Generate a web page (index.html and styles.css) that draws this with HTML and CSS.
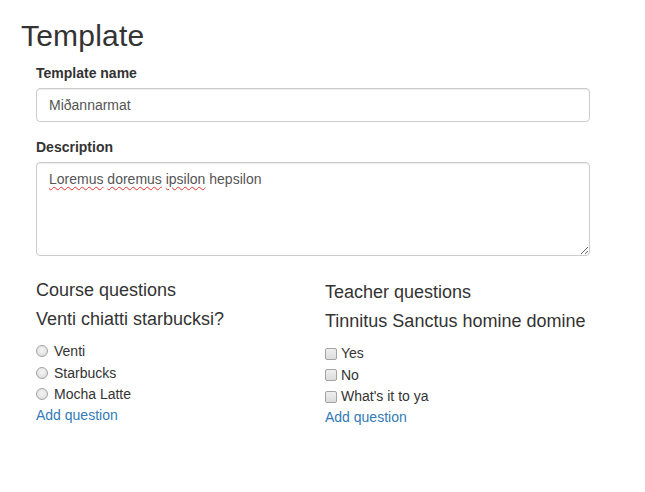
FILE: index.html
```html
<!DOCTYPE html>
<html lang="en">
<head>
<meta charset="utf-8">
<title>Template</title>
<link rel="stylesheet" href="styles.css">
</head>
<body>
<div class="page">
  <h1 class="title">Template</h1>
  <form class="form">
    <div class="form-group">
      <label class="field-label" for="tname">Template name</label>
      <input class="form-control" id="tname" type="text" value="Miðannarmat">
    </div>
    <div class="form-group">
      <label class="field-label" for="tdesc">Description</label>
      <div class="textarea-wrap">
        <textarea class="form-control textarea" id="tdesc" rows="4" spellcheck="false">Loremus doremus ipsilon hepsilon</textarea>
        <div class="spell-layer" aria-hidden="true"><span class="misspelled">Loremus</span> <span class="misspelled">doremus</span> <span class="misspelled">ipsilon</span> hepsilon</div>
      </div>
    </div>
    <div class="columns">
      <section class="col">
        <h4 class="section-title">Course questions</h4>
        <h4 class="question">Venti chiatti starbucksi?</h4>
        <label class="option"><input class="radio" type="radio" name="q1"><span>Venti</span></label>
        <label class="option"><input class="radio" type="radio" name="q1"><span>Starbucks</span></label>
        <label class="option"><input class="radio" type="radio" name="q1"><span>Mocha Latte</span></label>
        <a class="add-link" href="#">Add question</a>
      </section>
      <section class="col col-right">
        <h4 class="section-title">Teacher questions</h4>
        <h4 class="question">Tinnitus Sanctus homine domine</h4>
        <label class="option"><input class="check" type="checkbox"><span>Yes</span></label>
        <label class="option"><input class="check" type="checkbox"><span>No</span></label>
        <label class="option"><input class="check" type="checkbox"><span>What's it to ya</span></label>
        <a class="add-link" href="#">Add question</a>
      </section>
    </div>
  </form>
</div>
</body>
</html>
```

FILE: styles.css
```css
* { box-sizing: border-box; }

html, body {
  margin: 0;
  padding: 0;
  background: #fff;
}

body {
  font-family: "Liberation Sans", Arial, Helvetica, sans-serif;
  font-size: 14px;
  line-height: 20px;
  color: #333;
}

.page {
  padding: 19px 0 0 21px;
}

.title {
  margin: 0 0 11px 0;
  font-size: 30px;
  line-height: 33px;
  font-weight: 500;
  color: #333;
  letter-spacing: 0.2px;
}

.form {
  margin: 0 0 0 15px;
  width: 554px;
}

.form-group {
  margin-bottom: 15px;
}

.field-label {
  display: block;
  margin-bottom: 5px;
  font-weight: bold;
  line-height: 20px;
}

.form-control {
  display: block;
  width: 100%;
  height: 34px;
  margin: 0;
  padding: 6px 12px;
  font-family: inherit;
  font-size: 14px;
  line-height: 20px;
  color: #555;
  background: #fff;
  border: 1px solid #ccc;
  border-radius: 4px;
  box-shadow: inset 0 1px 1px rgba(0, 0, 0, 0.075);
  outline: none;
}

.textarea-wrap {
  position: relative;
}

.textarea {
  height: 94px;
  resize: vertical;
}

.spell-layer {
  position: absolute;
  left: 1px;
  top: 1px;
  padding: 6px 12px 0 12px;
  font-size: 14px;
  line-height: 20px;
  color: transparent;
  pointer-events: none;
  white-space: pre;
}

.misspelled {
  text-decoration: underline wavy #e0312f;
  text-decoration-thickness: 1px;
  text-underline-offset: 2px;
}

.columns {
  display: grid;
  grid-template-columns: 289px 1fr;
}

.col {
  display: flex;
  flex-direction: column;
  align-items: flex-start;
}

.col-right {
  padding-top: 2px;
}

.section-title,
.question {
  margin: 10px 0 0 0;
  font-size: 18px;
  line-height: 19.8px;
  font-weight: 500;
  color: #333;
}

.question {
  margin-top: 9px;
  margin-bottom: 11px;
}

.option {
  display: flex;
  align-items: center;
  height: 21.5px;
  font-weight: normal;
  cursor: pointer;
}

.radio,
.check {
  appearance: none;
  -webkit-appearance: none;
  width: 12px;
  height: 12px;
  margin: 0 5px 0 0;
  flex: none;
  border: 1px solid #a3a3a3;
  background: linear-gradient(#f2f2f2, #d9d9d9);
}

.radio {
  border-radius: 50%;
  margin-right: 6px;
  background: radial-gradient(circle at 50% 40%, #f5f5f5 0%, #e4e4e4 60%, #d0d0d0 100%);
}

.check {
  border-radius: 2px;
  margin-right: 4px;
  margin-top: 1px;
  background: linear-gradient(#eeeeee, #dcdcdc);
}

.add-link {
  color: #337ab7;
  text-decoration: none;
  line-height: 20px;
}
```
